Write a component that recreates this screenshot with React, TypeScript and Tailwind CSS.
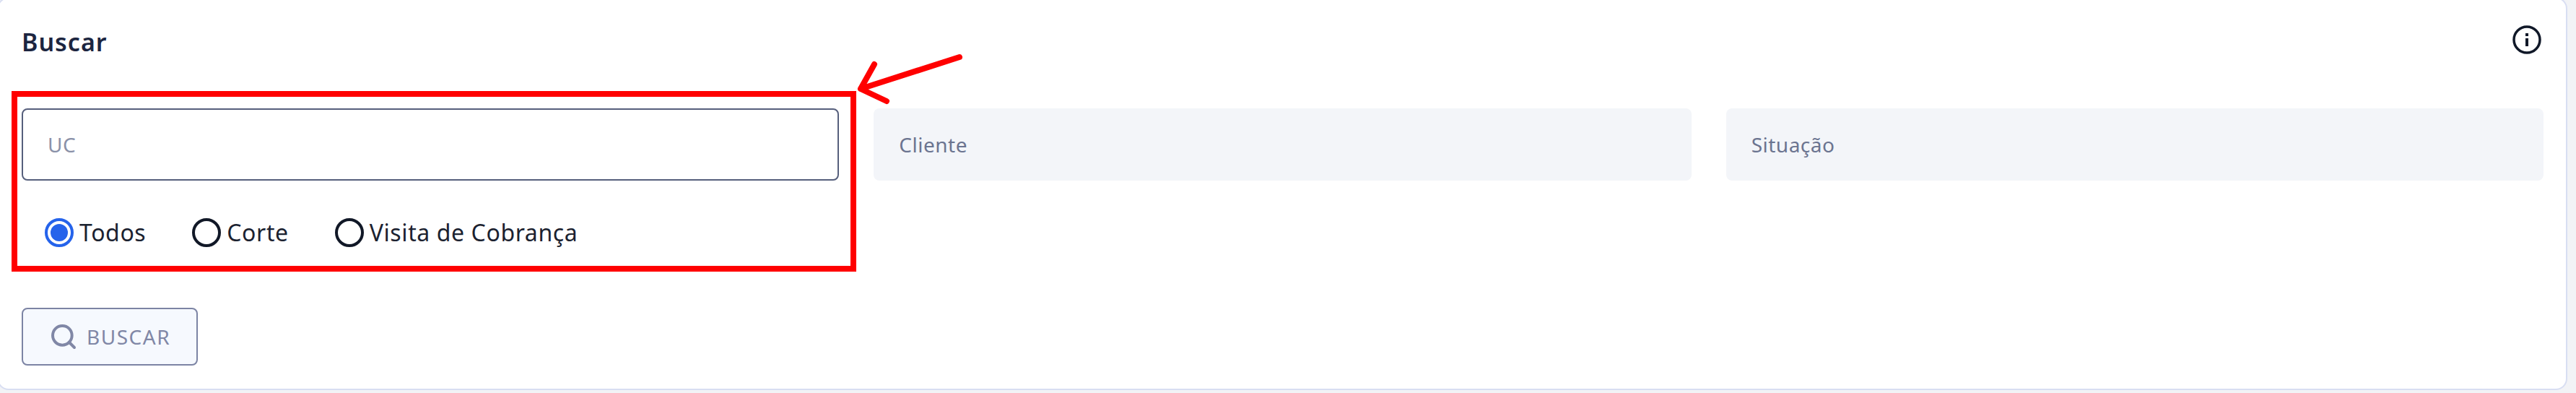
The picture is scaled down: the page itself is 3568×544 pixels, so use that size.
import { Search } from "lucide-react";

const font = "font-['Noto_Sans','Inter',sans-serif]";

function Radio({ label, checked }: { label: string; checked?: boolean }) {
  return (
    <label className="flex items-center gap-[8px]">
      {checked ? (
        <span className="flex h-[40px] w-[40px] items-center justify-center rounded-full border-[4px] border-[#2563eb]">
          <span className="h-[24px] w-[24px] rounded-full bg-[#2563eb]" />
        </span>
      ) : (
        <span className="h-[40px] w-[40px] rounded-full border-[4px] border-[#111827]" />
      )}
      <span className="text-[32px] leading-[40px] tracking-[0.6px] text-[#1b2230]">{label}</span>
    </label>
  );
}

function Field({ label, active }: { label: string; active?: boolean }) {
  return (
    <div
      className={
        active
          ? "flex h-[100px] items-center rounded-[8px] border-2 border-[#565f7c] bg-white px-[34px]"
          : "flex h-[100px] items-center rounded-[8px] bg-[#f3f5f9] px-[35px]"
      }
    >
      <span className={active ? "text-[28px] tracking-[0.5px] text-[#8a91a8]" : "text-[28px] tracking-[0.5px] text-[#6b7490]"}>{label}</span>
    </div>
  );
}

export default function App() {
  return (
    <div className={`relative h-[544px] w-[3568px] overflow-hidden bg-[#f2f3f6] ${font}`}>
      <div className="ml-[-4px] mt-[-4px] h-[544px] w-[3560px] rounded-[16px] border-2 border-[#d8def2] bg-white pl-[32px] pr-[31px]">
        <div className="flex h-[152px] items-start justify-between pt-[40px]">
          <h2 className="text-[34px] font-semibold leading-[40px] tracking-[1px] text-[#1c2540]">Buscar</h2>
          <svg
            className="mr-[3px] mt-[-3px]"
            width="40"
            height="40"
            viewBox="0 0 40 40"
            fill="none"
            stroke="#101828"
            strokeWidth="3.5"
          >
            <circle cx="20" cy="20" r="18" />
            <path d="M20 18v11" strokeWidth="4" />
            <path d="M20 11v4" strokeWidth="4" />
          </svg>
        </div>

        <div className="grid grid-cols-3 gap-x-[48px]">
          <Field label="UC" active />
          <Field label="Cliente" />
          <Field label="Situação" />
        </div>

        <div className="mt-[52px] flex gap-[64px] pl-[32px]">
          <Radio label="Todos" checked />
          <Radio label="Corte" />
          <Radio label="Visita de Cobrança" />
        </div>

        <button
          type="button"
          className="mt-[84px] flex h-[80px] w-[244px] items-center gap-[12px] rounded-[8px] border-2 border-[#7c84a4] bg-[#f6f9fe] pl-[36px] text-[28px] tracking-[1.5px] text-[#8087a6]"
        >
          <Search size={40} strokeWidth={2.4} />
          BUSCAR
        </button>
      </div>

      {/* annotation over the screenshot */}
      <div className="absolute left-[16px] top-[126px] h-[250px] w-[1170px] border-[8px] border-[#ff0000]" />
      <svg className="absolute left-[1180px] top-[70px]" width="160" height="80" fill="none" stroke="#ff0000" strokeWidth="8" strokeLinecap="round" strokeLinejoin="round">
        <path d="M149 9 L12 53 M31 19 L12 53 L48 70" />
      </svg>
    </div>
  );
}
